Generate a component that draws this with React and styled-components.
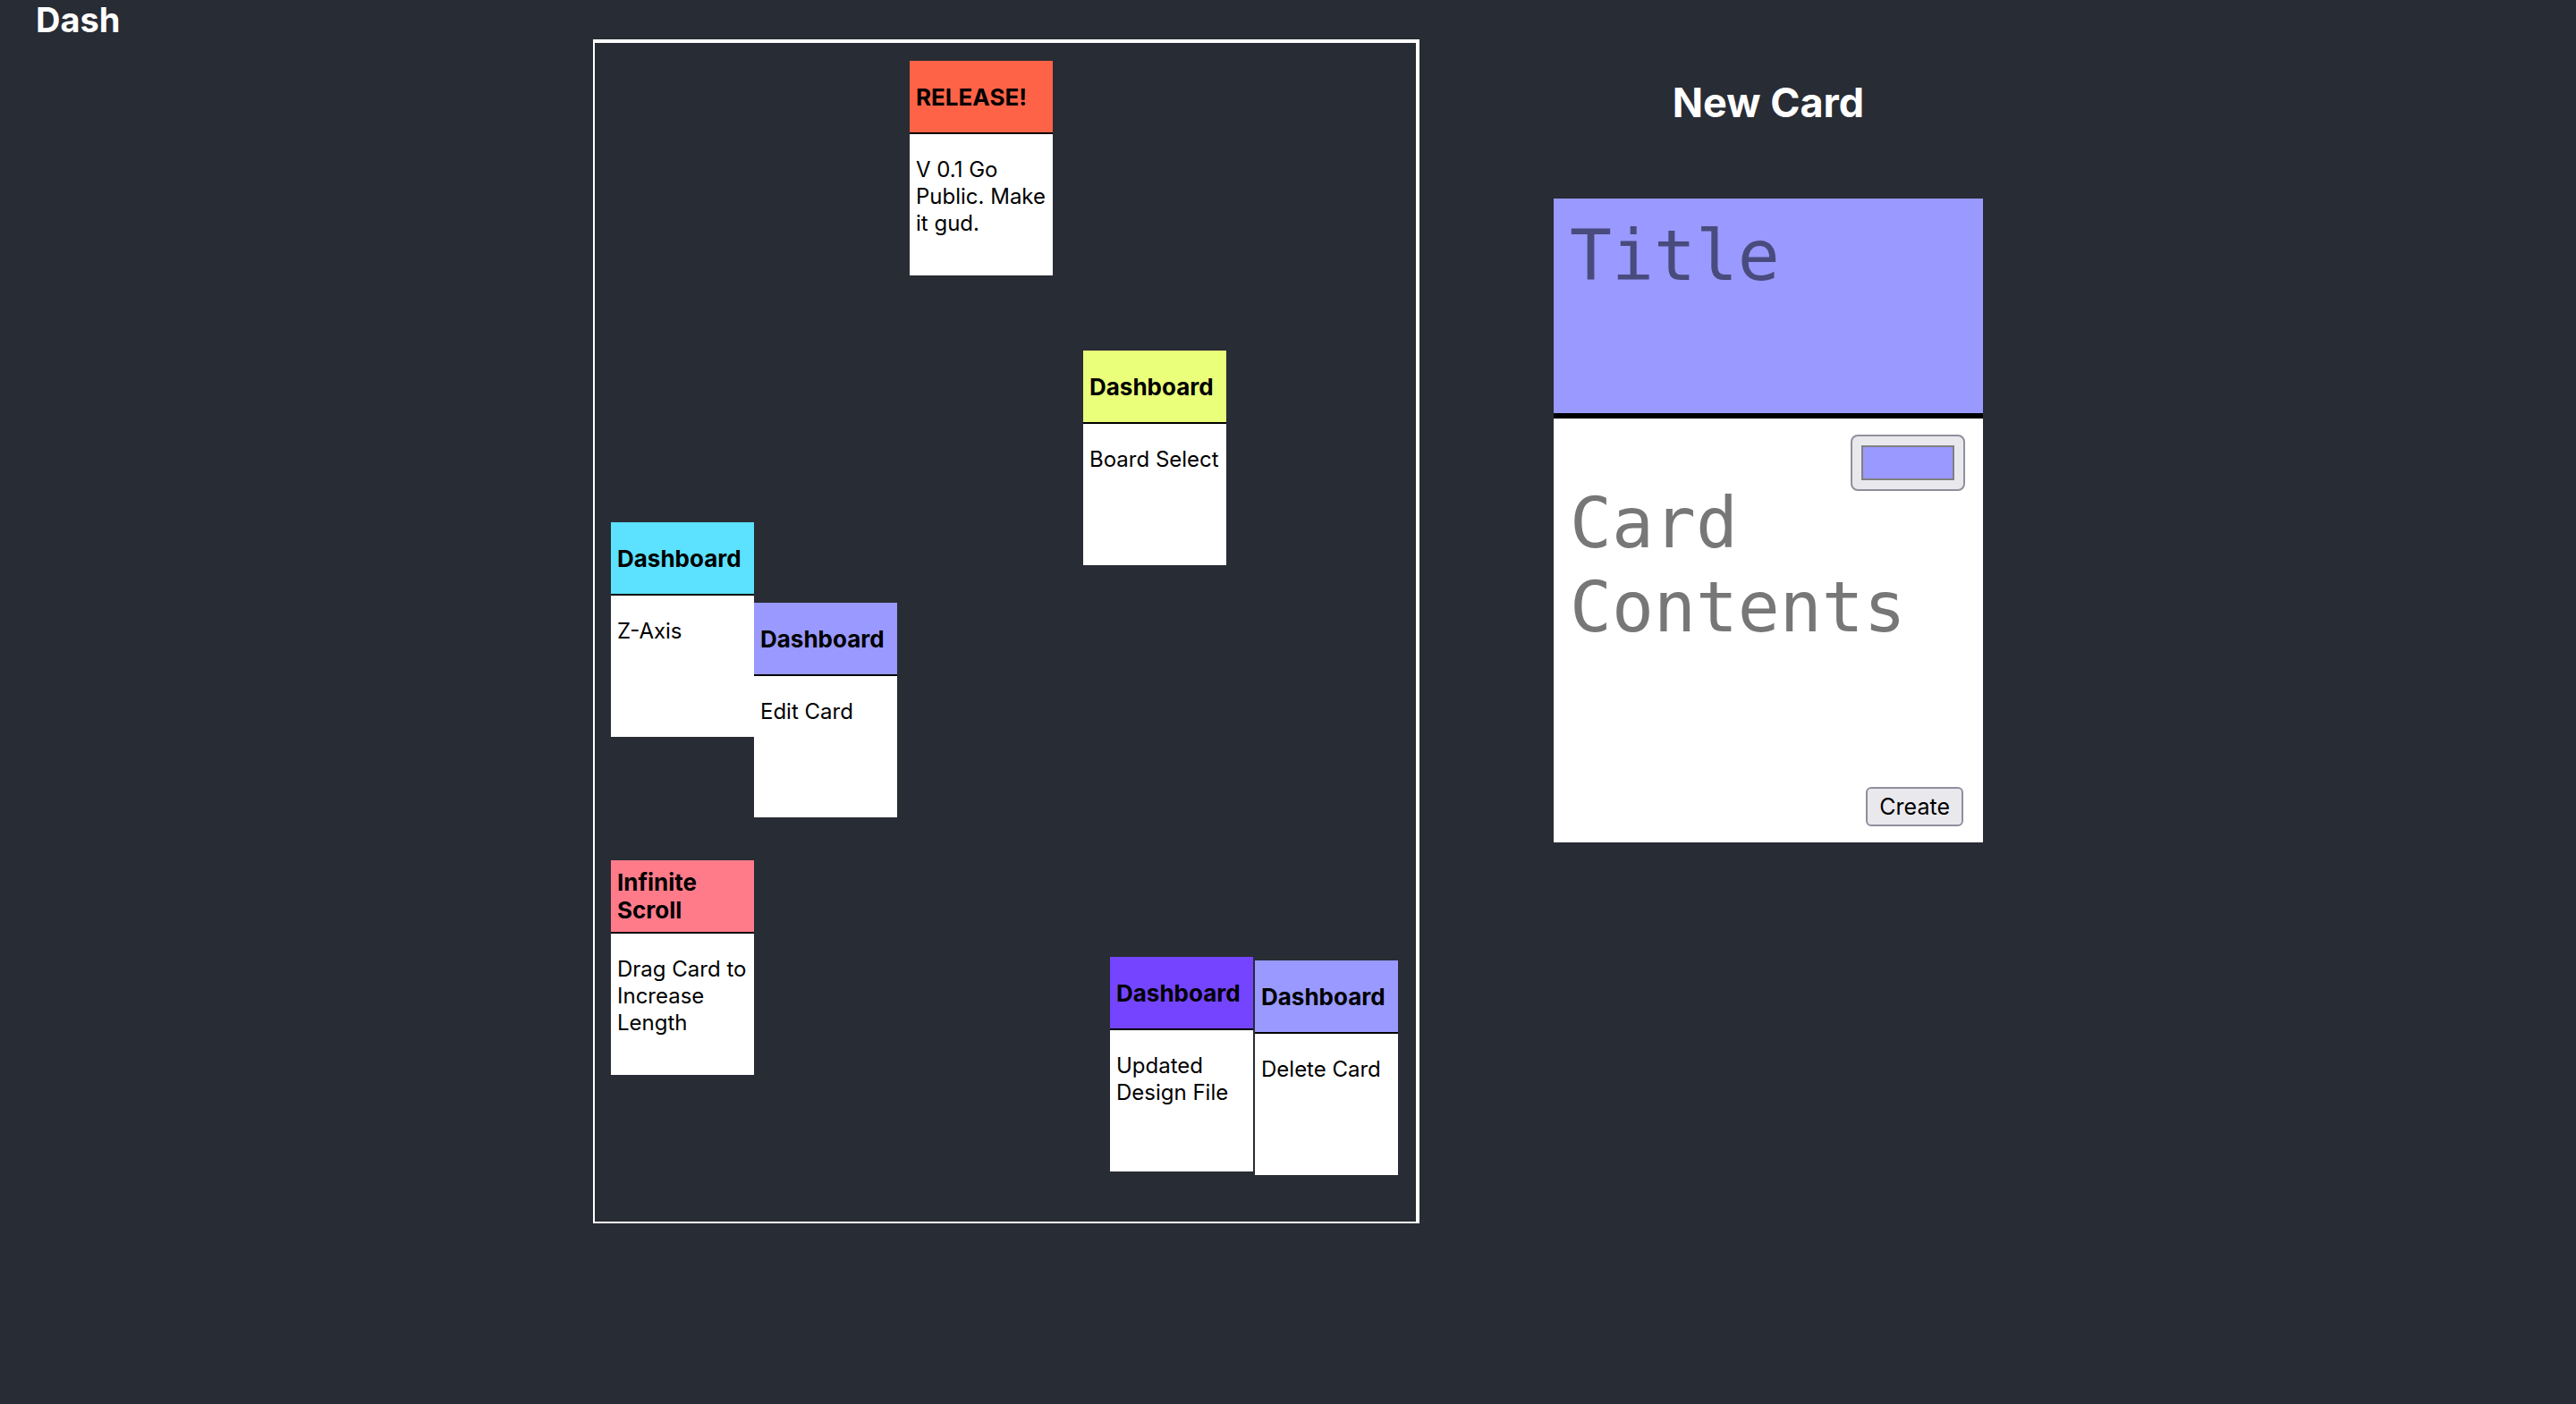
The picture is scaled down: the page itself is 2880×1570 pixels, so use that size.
import React from "react";
import styled, { createGlobalStyle } from "styled-components";

const GlobalStyle = createGlobalStyle`
  html, body {
    margin: 0;
    padding: 0;
    background: #282c34;
    font-family: Inter, "Noto Sans", sans-serif;
  }
  * { box-sizing: border-box; }
`;

const Page = styled.div`
  min-height: 1570px;
  background: #282c34;
  color: #fff;
`;

const TopBar = styled.header`
  height: 44px;
  padding-left: 40px;
  display: flex;
  align-items: flex-start;
`;

const Brand = styled.h1`
  margin: 0;
  font-size: 38px;
  font-weight: 700;
  line-height: 44px;
  color: #fff;
`;

const Main = styled.main`
  display: flex;
  justify-content: center;
  align-items: flex-start;
  gap: 150px;
`;

const Board = styled.section`
  position: relative;
  width: 924px;
  height: 1324px;
  border-style: solid;
  border-color: #fff;
  border-width: 4px 4px 2px 2px;
`;

const Card = styled.article`
  position: absolute;
  width: 160px;
  height: 240px;
  display: flex;
  flex-direction: column;
  background: #fff;
  color: #000;
`;

const CardHeader = styled.div`
  height: 82px;
  flex: none;
  display: flex;
  align-items: center;
  padding: 0 6px 0 7px;
  background: ${(p) => p.$color};
  border-bottom: 2px solid #000;
`;

const CardTitle = styled.h3`
  margin: 0;
  font-size: 26px;
  font-weight: 700;
  line-height: 31px;
`;

const CardBody = styled.div`
  flex: 1;
  padding: 0 5px 0 7px;
`;

const CardText = styled.p`
  margin: 25px 0 0;
  font-size: 24px;
  line-height: 30px;
`;

const Sidebar = styled.aside`
  width: 480px;
  display: flex;
  flex-direction: column;
  align-items: stretch;
`;

const SidebarTitle = styled.h2`
  margin: 44px 0 0;
  height: 134px;
  text-align: center;
  font-size: 45px;
  font-weight: 700;
  line-height: 54px;
  color: #fff;
`;

const NewCardForm = styled.form`
  width: 480px;
  display: flex;
  flex-direction: column;
  background: #fff;
`;

const TitleInput = styled.textarea`
  display: block;
  width: 100%;
  height: 246px;
  resize: none;
  margin: 0;
  border: none;
  border-bottom: 6px solid #000;
  outline: none;
  padding: 19px 18px;
  background: #9999ff;
  color: #2a2a55;
  font-family: "DejaVu Sans Mono", "Liberation Mono", monospace;
  font-size: 78px;
  line-height: normal;
  &::placeholder { color: #494b7c; opacity: 1; }
`;

const FormBody = styled.div`
  height: 474px;
  display: flex;
  flex-direction: column;
  padding: 18px 22px 18px 20px;
`;

const PickerRow = styled.div`
  display: flex;
  justify-content: flex-end;
  margin-right: -2px;
`;

const ColorButton = styled.button`
  width: 128px;
  height: 63px;
  padding: 10px;
  border: 2px solid #8f8f9d;
  border-radius: 8px;
  background: #e9e9ed;
  display: flex;
  cursor: pointer;
`;

const Swatch = styled.span`
  flex: 1;
  border: 2px solid #808080;
  background: ${(p) => p.$color};
`;

const ContentsInput = styled.textarea`
  flex: 1;
  display: block;
  width: 100%;
  margin: -11px 0 0 -2px;
  padding: 0;
  border: none;
  outline: none;
  resize: none;
  background: transparent;
  font-family: "DejaVu Sans Mono", "Liberation Mono", monospace;
  font-size: 78px;
  line-height: 94px;
  color: #333;
  &::placeholder { color: #777; opacity: 1; }
`;

const ActionRow = styled.div`
  display: flex;
  justify-content: flex-end;
`;

const CreateButton = styled.button`
  height: 44px;
  padding: 0 13px;
  border: 2px solid #8f8f9d;
  border-radius: 6px;
  background: #e9e9ed;
  color: #000;
  font-family: Inter, "Noto Sans", sans-serif;
  font-size: 25px;
  cursor: pointer;
`;

const cards = [
  { id: 1, x: 352, y: 20, color: "#ff6347", title: "RELEASE!", text: "V 0.1 Go Public. Make it gud." },
  { id: 2, x: 546, y: 344, color: "#eaff7a", title: "Dashboard", text: "Board Select" },
  { id: 3, x: 18, y: 536, color: "#5ce1ff", title: "Dashboard", text: "Z-Axis" },
  { id: 4, x: 178, y: 626, color: "#9999ff", title: "Dashboard", text: "Edit Card" },
  { id: 5, x: 18, y: 914, color: "#ff7b8a", title: "Infinite Scroll", text: "Drag Card to Increase Length" },
  { id: 6, x: 576, y: 1022, color: "#7444ff", title: "Dashboard", text: "Updated Design File" },
  { id: 7, x: 738, y: 1026, color: "#9999ff", title: "Dashboard", text: "Delete Card" },
];

export default function App() {
  return (
    <Page>
      <GlobalStyle />
      <TopBar>
        <Brand>Dash</Brand>
      </TopBar>
      <Main>
        <Board>
          {cards.map((c) => (
            <Card key={c.id} style={{ left: c.x, top: c.y }}>
              <CardHeader $color={c.color}>
                <CardTitle>{c.title}</CardTitle>
              </CardHeader>
              <CardBody>
                <CardText>{c.text}</CardText>
              </CardBody>
            </Card>
          ))}
        </Board>
        <Sidebar>
          <SidebarTitle>New Card</SidebarTitle>
          <NewCardForm onSubmit={(e) => e.preventDefault()}>
            <TitleInput placeholder="Title" />
            <FormBody>
              <PickerRow>
                <ColorButton type="button" aria-label="Card colour">
                  <Swatch $color="#9999ff" />
                </ColorButton>
              </PickerRow>
              <ContentsInput placeholder="Card Contents" />
              <ActionRow>
                <CreateButton type="submit">Create</CreateButton>
              </ActionRow>
            </FormBody>
          </NewCardForm>
        </Sidebar>
      </Main>
    </Page>
  );
}
